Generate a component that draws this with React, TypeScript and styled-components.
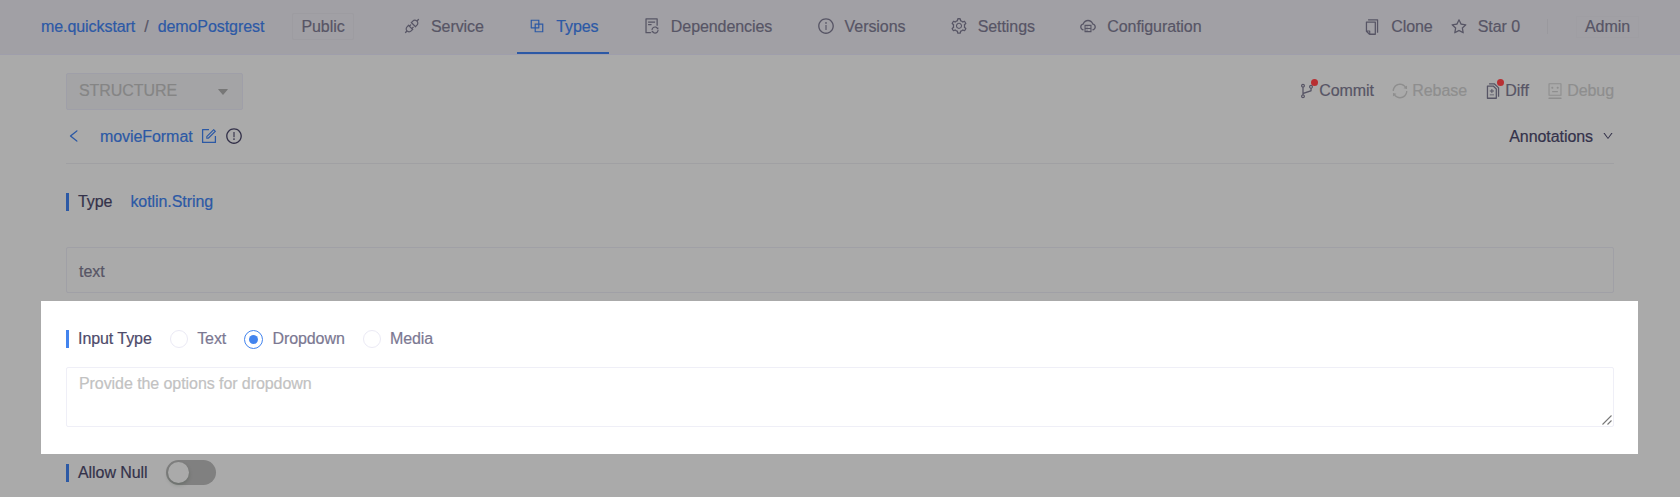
import React from "react";
import styled, { createGlobalStyle, css } from "styled-components";
import type { IconType } from "react-icons";
import {
  AiFillCaretDown,
  AiOutlineApi,
  AiOutlineBlock,
  AiOutlineBranches,
  AiOutlineCloudServer,
  AiOutlineCopy,
  AiOutlineDiff,
  AiOutlineDown,
  AiOutlineExclamationCircle,
  AiOutlineFileSync,
  AiOutlineForm,
  AiOutlineInfoCircle,
  AiOutlineLeft,
  AiOutlineRobot,
  AiOutlineSetting,
  AiOutlineStar,
  AiOutlineSync,
} from "react-icons/ai";

const color = {
  page: "#aaaaaa",
  header: "#a1a0a5",
  line: "#a0a0a3",
  text: "#575565",
  dark: "#34324a",
  blue: "#2c59a5",
  muted: "#858585",
};

const GlobalStyle = createGlobalStyle`
  * { box-sizing: border-box; }
  body {
    margin: 0;
    background: ${color.page};
    color: ${color.text};
    font: 16px/20px "Liberation Sans", Helvetica, Arial, sans-serif;
    letter-spacing: -0.07px;
    -webkit-text-stroke: 0.2px;
  }
  svg { display: block; flex: none; }
`;

const Page = styled.div`
  height: 497px;
  overflow: hidden;
`;

const Header = styled.header`
  display: flex;
  height: 55px;
  padding: 0 41px;
  background: ${color.header};
  border-bottom: 1px solid #9f9eab;
`;

const Breadcrumb = styled.div`
  display: flex;
  align-items: center;
  gap: 9px;
  width: 251px;
  padding-bottom: 1px;
  color: ${color.text};
`;

const Crumb = styled.a`
  color: ${color.blue};
`;

const Badge = styled.span`
  display: flex;
  align-items: center;
  justify-content: center;
  width: 62px;
  height: 27px;
  margin: 13px 38px 0 0;
  border: 1px solid #9d9ca1;
  border-radius: 2px;
`;

const Tabs = styled.nav`
  display: flex;
  gap: 23.3px;
`;

const Tab = styled.a<{ $active?: boolean }>`
  display: flex;
  align-items: center;
  gap: 10px;
  padding: 0 10px 0 11px;
  height: 54px;
  color: ${(p) => (p.$active ? color.blue : color.text)};
  border-top: 1px solid transparent;
  border-bottom: 2px solid ${(p) => (p.$active ? color.blue : "transparent")};

  svg {
    margin-bottom: 2px;
  }
`;

const HeaderActions = styled.div`
  display: flex;
  align-items: center;
  margin-left: auto;
  padding-bottom: 1px;
`;

const HeaderAction = styled.a`
  display: flex;
  align-items: center;
  gap: 10px;
  margin-right: 17px;
`;

const Divider = styled.span`
  width: 1px;
  height: 15px;
  margin: 0 28px 0 10px;
  background: #9a999e;
`;

const Role = styled.span`
  padding: 0 8px;
  border: 1px solid #9f9ea3;
`;

const Content = styled.main`
  padding: 18px 66px 0;
`;

const Toolbar = styled.div`
  display: flex;
  justify-content: space-between;
  height: 37px;
`;

const Select = styled.div`
  display: flex;
  align-items: center;
  justify-content: space-between;
  width: 177px;
  padding: 0 12px 2px 12px;
  color: ${color.muted};
  background: #a4a4a6;
  border: 1px solid #9f9fa8;
  border-radius: 2px;

  svg {
    margin-top: 2px;
    color: #777777;
  }
`;

const Actions = styled.div`
  display: flex;
  align-items: center;
  gap: 17.4px;
  padding-bottom: 1px;
`;

const Action = styled.a<{ $disabled?: boolean }>`
  display: flex;
  align-items: center;
  gap: 3px;
  color: ${(p) => (p.$disabled ? "#8e8e8e" : color.text)};
`;

const IconHolder = styled.span`
  position: relative;
`;

const Dot = styled.span`
  position: absolute;
  top: -3px;
  right: -2px;
  width: 7px;
  height: 7px;
  border-radius: 50%;
  background: #b83033;
`;

const TitleRow = styled.div`
  display: flex;
  align-items: center;
  height: 54px;
  border-bottom: 1px solid ${color.line};
`;

const BackLink = styled.a`
  display: flex;
  width: 34px;
  margin-bottom: 2px;
  color: ${color.blue};
`;

const Title = styled.span`
  margin-right: 7px;
  color: ${color.blue};
`;

const TitleIcon = styled.span<{ $blue?: boolean }>`
  margin: 0 7px 2px 0;
  color: ${(p) => (p.$blue ? color.blue : color.dark)};
`;

const Annotations = styled.div`
  display: flex;
  align-items: center;
  gap: 9px;
  margin-left: auto;
  color: ${color.dark};

  svg {
    margin-bottom: 2px;
  }
`;

const FieldRow = styled.div<{ $height: number }>`
  display: flex;
  align-items: center;
  height: ${(p) => p.$height}px;
`;

const Label = styled.span<{ $bright?: boolean }>`
  height: 18px;
  line-height: 18px;
  padding-left: 9px;
  margin-right: 18px;
  border-left: 3px solid ${(p) => (p.$bright ? "#4384ee" : color.blue)};
  color: ${(p) => (p.$bright ? "#4e4b6b" : color.dark)};
`;

const TypeName = styled.a`
  color: ${color.blue};
`;

const box = css`
  display: block;
  width: 100%;
  border-radius: 2px;
  font: inherit;
  letter-spacing: inherit;
`;

const TextField = styled.div`
  ${box}
  height: 46px;
  margin-top: 7px;
  padding: 0 12px 0;
  line-height: 47px;
  border: 1px solid #a0a0a6;
`;

const Panel = styled.section`
  height: 153px;
  margin: 8px -24px 0 -25px;
  padding: 20px 24px 0 25px;
  background: #fff;
`;

const Radio = styled.label`
  display: flex;
  align-items: center;
  gap: 9.4px;
  margin-right: 17.8px;
  color: #7b7892;
`;

const RadioMark = styled.span<{ $on?: boolean }>`
  display: flex;
  align-items: center;
  justify-content: center;
  width: ${(p) => (p.$on ? 19 : 18)}px;
  height: ${(p) => (p.$on ? 19 : 18)}px;
  border: 1px solid ${(p) => (p.$on ? "#4384ee" : "#ebeaf5")};
  border-radius: 50%;

  &::after {
    content: "";
    width: 9px;
    height: 9px;
    border-radius: 50%;
    background: ${(p) => (p.$on ? "#4384ee" : "transparent")};
  }
`;

const Options = styled.textarea`
  ${box}
  height: 60px;
  margin-top: 10px;
  padding: 6px 12px;
  line-height: 20px;
  border: 1px solid #efeff7;
  outline: none;
  resize: none;

  &::placeholder {
    color: #c2c2c2;
  }
`;

const OptionsFrame = styled.div`
  position: relative;
`;

const ResizeGrip = styled.svg`
  position: absolute;
  right: 2px;
  bottom: 2px;
`;

const Switch = styled.button`
  display: flex;
  align-items: center;
  width: 50px;
  height: 25px;
  padding: 2px;
  border: 0;
  border-radius: 13px;
  background: #808080;
`;

const Knob = styled.span`
  width: 21px;
  height: 21px;
  border-radius: 50%;
  background: #aaaaaa;
  box-shadow: 0 2px 4px rgba(0, 35, 11, 0.2);
`;

const tabs: { label: string; icon: IconType; active?: boolean }[] = [
  { label: "Service", icon: AiOutlineApi },
  { label: "Types", icon: AiOutlineBlock, active: true },
  { label: "Dependencies", icon: AiOutlineFileSync },
  { label: "Versions", icon: AiOutlineInfoCircle },
  { label: "Settings", icon: AiOutlineSetting },
  { label: "Configuration", icon: AiOutlineCloudServer },
];

const actions: { label: string; icon: IconType; dot?: boolean; disabled?: boolean }[] = [
  { label: "Commit", icon: AiOutlineBranches, dot: true },
  { label: "Rebase", icon: AiOutlineSync, disabled: true },
  { label: "Diff", icon: AiOutlineDiff, dot: true },
  { label: "Debug", icon: AiOutlineRobot, disabled: true },
];

export default function App() {
  return (
    <Page>
      <GlobalStyle />
      <Header>
        <Breadcrumb>
          <Crumb>me.quickstart</Crumb>/<Crumb>demoPostgrest</Crumb>
        </Breadcrumb>
        <Badge>Public</Badge>
        <Tabs>
          {tabs.map(({ label, icon: Icon, active }) => (
            <Tab key={label} $active={active}>
              <Icon size={18} />
              {label}
            </Tab>
          ))}
        </Tabs>
        <HeaderActions>
          <HeaderAction>
            <AiOutlineCopy size={18} />
            Clone
          </HeaderAction>
          <HeaderAction>
            <AiOutlineStar size={18} />
            Star 0
          </HeaderAction>
          <Divider />
          <Role>Admin</Role>
        </HeaderActions>
      </Header>
      <Content>
        <Toolbar>
          <Select>
            STRUCTURE
            <AiFillCaretDown size={14} />
          </Select>
          <Actions>
            {actions.map(({ label, icon: Icon, dot, disabled }) => (
              <Action key={label} $disabled={disabled}>
                <IconHolder>
                  <Icon size={18} />
                  {dot && <Dot />}
                </IconHolder>
                {label}
              </Action>
            ))}
          </Actions>
        </Toolbar>
        <TitleRow>
          <BackLink>
            <AiOutlineLeft size={16} />
          </BackLink>
          <Title>movieFormat</Title>
          <TitleIcon $blue>
            <AiOutlineForm size={18} />
          </TitleIcon>
          <TitleIcon>
            <AiOutlineExclamationCircle size={18} />
          </TitleIcon>
          <Annotations>
            Annotations
            <AiOutlineDown size={12} />
          </Annotations>
        </TitleRow>
        <FieldRow $height={76}>
          <Label>Type</Label>
          <TypeName>kotlin.String</TypeName>
        </FieldRow>
        <TextField>text</TextField>
        <Panel>
          <FieldRow $height={36}>
            <Label $bright>Input Type</Label>
            <Radio>
              <RadioMark />
              Text
            </Radio>
            <Radio>
              <RadioMark $on />
              Dropdown
            </Radio>
            <Radio>
              <RadioMark />
              Media
            </Radio>
          </FieldRow>
          <OptionsFrame>
            <Options placeholder="Provide the options for dropdown" />
            <ResizeGrip width="10" height="10" viewBox="0 0 10 10" stroke="#777" strokeWidth="1.1">
              <path d="M0.5 9.5 9.5 0.5M5.5 9.5 9.5 5.5" />
            </ResizeGrip>
          </OptionsFrame>
        </Panel>
        <FieldRow $height={37}>
          <Label>Allow Null</Label>
          <Switch>
            <Knob />
          </Switch>
        </FieldRow>
      </Content>
    </Page>
  );
}
